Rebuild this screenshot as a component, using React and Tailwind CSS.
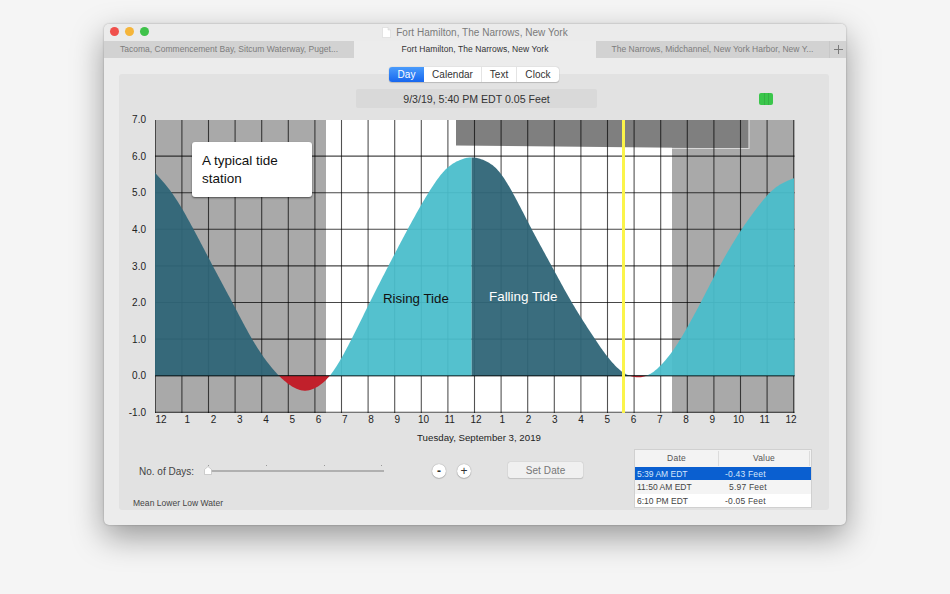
import React from "react";

const pts = [[155,172.7],[173.3,193],[194,229.7],[212.7,266],[232.7,303],[251.7,339.5],[265,360],[278.3,376],[291,387],[305,393.2],[319,387],[331.7,376],[351.7,339.5],[369.3,303],[388.3,266],[407.3,229.7],[427.7,193],[446.7,165.5],[471.7,155],[496.7,165.5],[513.3,193],[531.7,229.7],[551.7,266],[571.7,303],[595,339.5],[610,361],[623.3,374.5],[630,377],[640,378.6],[650,376],[660,367],[672,353],[680.7,339.5],[700.7,303],[719.3,266],[740.7,229.7],[768,193],[780,183.3],[794.5,178]];

function rawAt(x) {
  if (x <= pts[0][0]) return pts[0][1] + (x - pts[0][0]) * ((pts[1][1] - pts[0][1]) / (pts[1][0] - pts[0][0]));
  const n = pts.length - 1;
  if (x >= pts[n][0]) return pts[n][1] + (x - pts[n][0]) * ((pts[n][1] - pts[n - 1][1]) / (pts[n][0] - pts[n - 1][0]));
  for (let i = 0; i < n; i++) {
    if (x <= pts[i + 1][0]) {
      const p = (x - pts[i][0]) / (pts[i + 1][0] - pts[i][0]);
      return pts[i][1] + (pts[i + 1][1] - pts[i][1]) * p;
    }
  }
  return 376;
}
function boxed(fn, r) {
  return (x) => {
    let s = 0;
    let c = 0;
    for (let k = -r; k <= r; k++) {
      s += fn(x + k);
      c++;
    }
    return s / c;
  };
}
const smooth = boxed(boxed(rawAt, 8), 8);
let area = `M155 376`;
for (let x = 155; x <= 794.5; x += 1) area += ` L${x} ${smooth(x).toFixed(2)}`;
area += ` L794.5 376 Z`;

const X = (t) => 155.3 + t * 26.6;
const Y = (v) => 375.7 - v * 36.6;
const hours = Array.from({ length: 25 }, (_, i) => i);
const levels = [7, 6, 5, 4, 3, 2, 1, 0, -1];
const xLabels = [12, 1, 2, 3, 4, 5, 6, 7, 8, 9, 10, 11, 12, 1, 2, 3, 4, 5, 6, 7, 8, 9, 10, 11, 12];
const font = "font-['Liberation_Sans',Arial,sans-serif]";

function Chart() {
  return (
    <svg width="640" height="293" viewBox="155 120 640 293" className="block">
      <rect x="155" y="120" width="639.5" height="293" fill="#a9a9a9" />
      <rect x="326" y="120" width="346" height="293" fill="#ffffff" />
      <path d="M456 120H749V148.5L456 145.5Z" fill="#7f7f7f" />
      <path d="M672 148.5H749V120" fill="none" stroke="#d8d8d8" strokeWidth="1.2" />
      {hours.map((h) => (
        <line key={h} x1={X(h)} x2={X(h)} y1="120" y2="413" stroke="#000000" strokeOpacity="0.68" strokeWidth="1.1" />
      ))}
      {levels.map((l) => (
        <line key={l} x1="155" x2="794.5" y1={Y(l)} y2={Y(l)} stroke="#000000" strokeOpacity="0.72" strokeWidth="1.1" />
      ))}
      <clipPath id="dark1"><rect x="155" y="120" width="125" height="256" /></clipPath>
      <clipPath id="light1"><rect x="328" y="120" width="143.7" height="256" /></clipPath>
      <clipPath id="dark2"><rect x="471.7" y="120" width="160" height="256" /></clipPath>
      <clipPath id="light2"><rect x="645" y="120" width="150" height="256" /></clipPath>
      <clipPath id="red"><rect x="155" y="376" width="640" height="40" /></clipPath>
      <path d={area} fill="#2f6577" opacity="0.95" clipPath="url(#dark1)" />
      <path d={area} fill="#49bdcb" opacity="0.94" clipPath="url(#light1)" />
      <path d={area} fill="#2f6577" opacity="0.95" clipPath="url(#dark2)" />
      <path d={area} fill="#49bdcb" opacity="0.94" clipPath="url(#light2)" />
      <path d={area} fill="#c1202b" clipPath="url(#red)" />
      <line x1="155" x2="794.5" y1="375.7" y2="375.7" stroke="#000000" strokeOpacity="0.72" strokeWidth="1.1" />
      <rect x="622" y="120" width="3" height="293" fill="#fbf44a" />
    </svg>
  );
}

export default function App() {
  return (
    <div className={`w-[950px] h-[594px] overflow-hidden bg-[#f5f5f5] pt-[24px] pl-[104px] ${font}`}>
      <div className="w-[742px] h-[501px] rounded-[5px] bg-[#ececec] shadow-[0_12px_32px_rgba(0,0,0,0.38),0_0_2px_rgba(0,0,0,0.3)] overflow-hidden flex flex-col">
        {/* title bar */}
        <div className="relative h-[17px] flex items-center justify-center gap-[5px] bg-[#ebebeb]">
          <div className="absolute left-[6px] top-[3px] flex gap-[6px]">
            <span className="w-[9px] h-[9px] rounded-full bg-[#f0504c]" />
            <span className="w-[9px] h-[9px] rounded-full bg-[#f5b53a]" />
            <span className="w-[9px] h-[9px] rounded-full bg-[#3fc24a]" />
          </div>
          <svg width="9" height="11" viewBox="0 0 9 11">
            <path d="M0.5 0.5H6L8.5 3V10.5H0.5Z" fill="#ffffff" stroke="#d0d0d0" strokeWidth="0.5" />
            <path d="M6 0.5V3H8.5" fill="#e8e8e8" stroke="#d0d0d0" strokeWidth="0.5" />
          </svg>
          <span className="text-[10px] leading-[17px] tracking-[0.03px] text-[#7a7a7a]">Fort Hamilton, The Narrows, New York</span>
        </div>
        {/* tabs */}
        <div className="h-[17px] flex text-[8.5px] leading-[17px] tracking-[0.02px]">
          <div className="w-[250px] bg-[#d2d2d2] text-[#7d7d7d] text-center truncate">Tacoma, Commencement Bay, Sitcum Waterway, Puget...</div>
          <div className="w-[242px] bg-[#ececec] text-[#333333] text-center tracking-[0.06px]">Fort Hamilton, The Narrows, New York</div>
          <div className="w-[233px] bg-[#d2d2d2] text-[#7d7d7d] text-center">The Narrows, Midchannel, New York Harbor, New Y...</div>
          <div className="w-[17px] bg-[#d2d2d2] border-l border-[#c8c8c8] flex items-center justify-center">
            <svg width="9" height="9" viewBox="0 0 9 9"><path d="M4.5 0V9M0 4.5H9" stroke="#7a7a7a" strokeWidth="1" /></svg>
          </div>
        </div>
        {/* panel */}
        <div className="mt-[16px] mx-[15px] w-[710px] h-[436px] rounded-[3px] bg-[#e2e2e2] flex flex-col">
          <div className="-mt-[7px] mx-auto h-[15px] flex rounded-[3px] bg-white shadow-[0_0_1px_rgba(0,0,0,0.35),0_1px_1px_rgba(0,0,0,0.15)] text-[10px] leading-[15px] tracking-[0.05px] text-[#333333]">
            <div className="w-[35px] text-center rounded-l-[3px] text-white bg-gradient-to-b from-[#4a9bfb] to-[#1766ee]">Day</div>
            <div className="w-[58px] text-center border-r border-[#e4e4e4]">Calendar</div>
            <div className="w-[35px] text-center border-r border-[#e4e4e4]">Text</div>
            <div className="w-[42px] text-center">Clock</div>
          </div>
          <div className="mt-[7px] h-[19px] flex items-center">
            <div className="ml-[237px] w-[241px] h-[19px] rounded-[2px] bg-[#d9d9d9] text-center text-[10.6px] leading-[20px] text-[#333333]">9/3/19, 5:40 PM EDT 0.05 Feet</div>
            <div className="ml-[162px] w-[14px] h-[12px] rounded-[2px] bg-[#3ac64b] flex justify-center gap-[3px]">
              <span className="w-px h-full bg-[#35b045]" />
              <span className="w-px h-full bg-[#35b045]" />
            </div>
          </div>
          {/* chart */}
          <div className="mt-[12px] flex relative">
            <div className="w-[27px] h-[305px] -mt-[6px] mb-[-6px] flex flex-col justify-between text-right text-[10px] leading-[12px] text-[#222222]">
              {levels.map((l) => (
                <span key={l}>{l.toFixed(1)}</span>
              ))}
            </div>
            <div className="ml-[9px]">
              <Chart />
            </div>
            <div className="absolute left-[73px] top-[22px] w-[120px] h-[55px] rounded-[3px] bg-white shadow-[0_1px_2px_rgba(0,0,0,0.55)] pl-[10px] pt-[10px] text-[13.5px] leading-[18px] text-[#111111]">
              A typical tide station
            </div>
            <span className="absolute left-[264px] top-[171px] text-[13.3px] leading-[16px] text-[#111111]">Rising Tide</span>
            <span className="absolute left-[370px] top-[169px] text-[13.4px] leading-[16px] text-white">Falling Tide</span>
          </div>
          {/* x labels */}
          <div className="ml-[36px] w-[642px] mt-[1px] h-[12px] flex justify-between text-[10px] leading-[12px] text-[#222222]">
            {xLabels.map((l, i) => (
              <span key={i} className="w-[12px] flex justify-center">{l}</span>
            ))}
          </div>
          <div className="mt-[6px] ml-[36px] w-[648px] text-center text-[9.7px] leading-[12px] text-[#222222]">Tuesday, September 3, 2019</div>
          {/* bottom */}
          <div className="mt-[5px] flex h-[60px]">
            <div className="w-[515px] flex flex-col pl-[14px]">
              <div className="mt-[13px] h-[18px] flex items-center">
                <span className="ml-[6px] w-[64px] text-[10px] text-[#444444] whitespace-nowrap">No. of Days:</span>
                <div className="relative ml-[1px] w-[180px] h-[18px]">
                  <div className="absolute left-[3px] right-0 top-[8px] h-[2px] bg-[#b0b0b0]" />
                  <span className="absolute left-[4px] top-[3px] w-px h-[1px] bg-[#999999]" />
                  <span className="absolute left-[62px] top-[3px] w-px h-[1px] bg-[#999999]" />
                  <span className="absolute left-[120px] top-[3px] w-px h-[1px] bg-[#999999]" />
                  <span className="absolute left-[177px] top-[3px] w-px h-[1px] bg-[#999999]" />
                  <svg className="absolute left-0 top-[4px]" width="8" height="9" viewBox="0 0 8 9">
                    <path d="M4 0.5L7.5 3.5V8.5H0.5V3.5Z" fill="#ffffff" stroke="#bdbdbd" strokeWidth="0.7" />
                  </svg>
                </div>
                <button className="ml-[48px] w-[14px] h-[14px] rounded-full bg-white shadow-[0_0_1px_rgba(0,0,0,0.45),0_1px_1px_rgba(0,0,0,0.15)] text-[12px] font-bold leading-[13px] text-[#333333] text-center">-</button>
                <button className="ml-[11px] w-[14px] h-[14px] rounded-full bg-white shadow-[0_0_1px_rgba(0,0,0,0.45),0_1px_1px_rgba(0,0,0,0.15)] text-[12px] leading-[13px] text-[#333333] text-center">+</button>
                <button className="ml-[37px] -mt-[2px] w-[75px] h-[16px] rounded-[2px] bg-[#f0f0f0] shadow-[0_0_1px_rgba(0,0,0,0.3),0_1px_1px_rgba(0,0,0,0.12)] text-[10px] leading-[17px] tracking-[0.1px] text-[#777777]">Set Date</button>
              </div>
              <div className="mt-auto text-[8.5px] leading-[11px] tracking-[0.03px] text-[#444444]">Mean Lower Low Water</div>
            </div>
            <div className="w-[178px] h-[59px] border border-[#d0d0d0] bg-white text-[8.5px] leading-[14.5px]">
              <div className="h-[17px] flex bg-[#f3f3f3] text-[#555555]">
                <div className="w-[84px] text-center border-r border-[#dcdcdc] my-[1px] leading-[15px] tracking-[0.2px]">Date</div>
                <div className="w-[91px] text-center border-r border-[#dcdcdc] my-[1px] leading-[15px] tracking-[0.2px]">Value</div>
              </div>
              <div className="h-[13.4px] flex bg-[#0a5fd0] text-[#d5e6fb]">
                <span className="w-[90px] pl-[2px]">5:39 AM EDT</span>
                <span className="tracking-[0.2px]">-0.43 Feet</span>
              </div>
              <div className="h-[13.4px] flex bg-[#f4f4f4] text-[#444444]">
                <span className="w-[94px] pl-[2px]">11:50 AM EDT</span>
                <span className="tracking-[0.2px]">5.97 Feet</span>
              </div>
              <div className="h-[13.4px] flex bg-white text-[#444444]">
                <span className="w-[90px] pl-[2px]">6:10 PM EDT</span>
                <span className="tracking-[0.2px]">-0.05 Feet</span>
              </div>
            </div>
          </div>
        </div>
      </div>
    </div>
  );
}
